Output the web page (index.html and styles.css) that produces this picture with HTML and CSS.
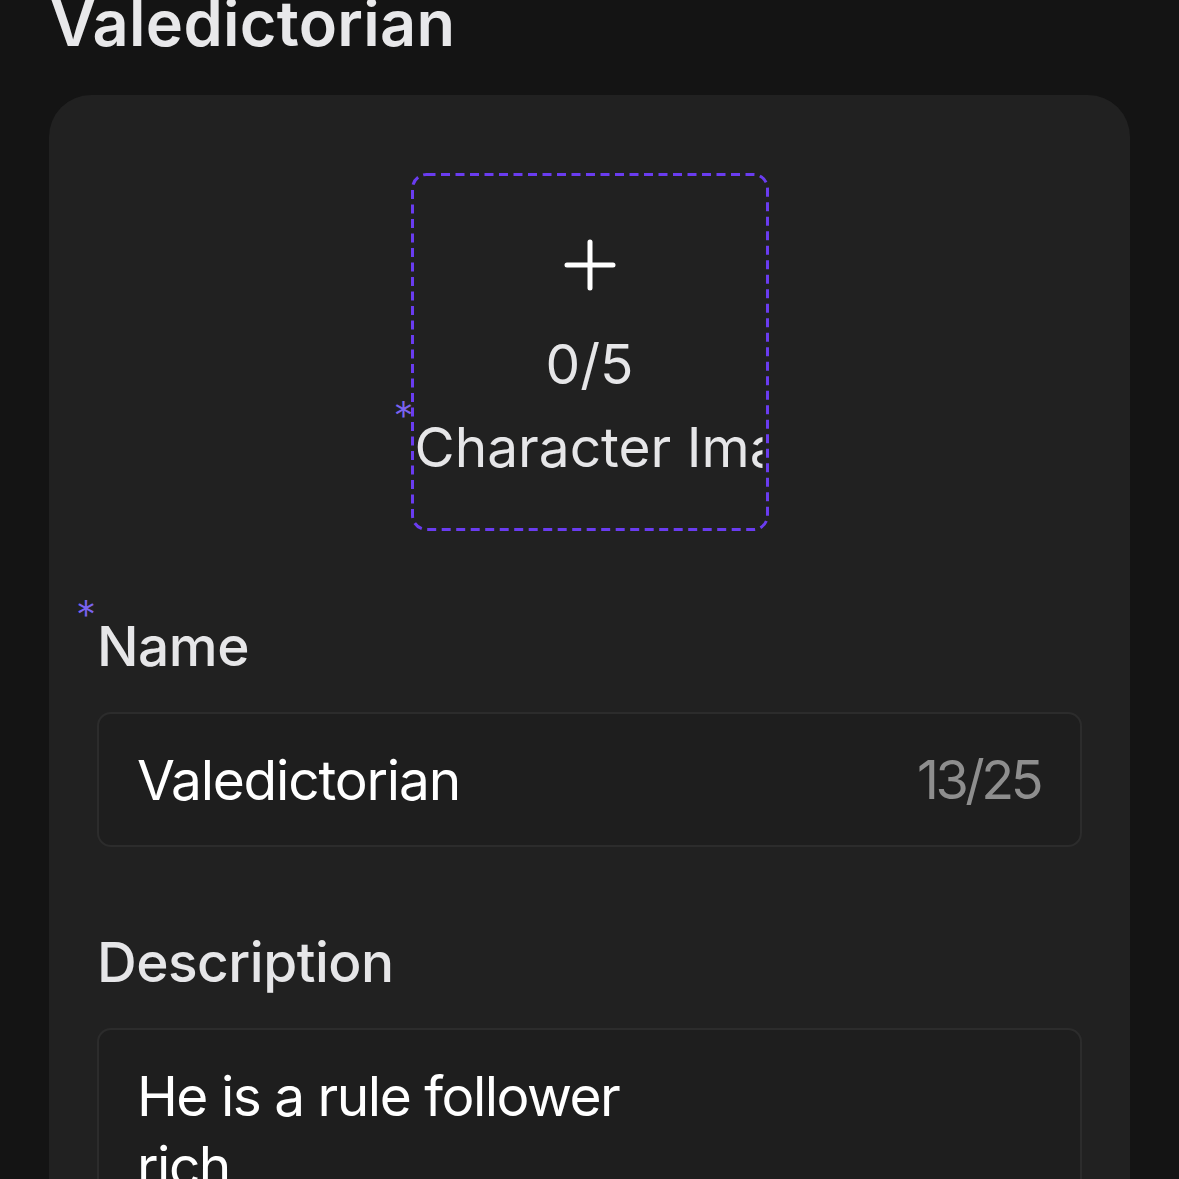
FILE: index.html
```html
<!DOCTYPE html>
<html lang="en">
<head>
    <meta charset="UTF-8">
    <meta name="viewport" content="width=device-width, initial-scale=1.0">
    <title>Edit Character</title>
    <link rel="stylesheet" href="styles.css">
</head>
<body>

    <!-- Page title -->
    <h1 class="page-title">Valedictorian</h1>

    <!-- Character form card -->
    <div class="card">
        <div class="upload-wrap">
            <div class="upload-box">
                <svg class="upload-border" width="358" height="358" viewBox="0 0 358 358">
                    <rect x="1.5" y="1.5" width="355" height="355" rx="14" ry="14" fill="none" stroke="#6a3cf0" stroke-width="3" stroke-dasharray="9 5.5"/>
                </svg>
                <svg class="plus-icon" width="52" height="52" viewBox="0 0 52 52">
                    <path d="M26 3 V49 M3 26 H49" stroke="#fff" stroke-width="5" stroke-linecap="round" fill="none"/>
                </svg>
                <div class="upload-count">0/5</div>
                <div class="upload-label required">Character Images</div>
            </div>
        </div>

        <div class="field">
            <label class="field-label required" for="name">Name</label>
            <div class="input-box">
                <span class="input-text" id="name">Valedictorian</span>
                <span class="input-count">13/25</span>
            </div>
        </div>

        <div class="field">
            <label class="field-label" for="desc">Description</label>
            <div class="textarea-box" id="desc">He is a rule follower
rich</div>
        </div>
    </div>

</body>
</html>
```

FILE: styles.css
```css
/* Global Styling */
body {
    font-family: 'Inter', 'Noto Sans', sans-serif;
    margin: 0;
    padding: 0;
    background-color: #141414;
    color: #e8e8ea;
    overflow: hidden;
}

/* Title */
.page-title {
    margin: -14px 0 0 50px;
    font-size: 63px;
    line-height: 74px;
    font-weight: 600;
    letter-spacing: 0.3px;
    color: #e8e8ea;
}

/* Card */
.card {
    margin: 35px 49px 0 49px;
    background-color: #212121;
    border-radius: 42px;
    padding: 78px 48px 80px 48px;
}

/* Upload box */
.upload-wrap {
    display: flex;
    justify-content: center;
}

.upload-box {
    position: relative;
    width: 358px;
    height: 358px;
    box-sizing: border-box;
    padding: 66px 4px 0 4px;
    display: flex;
    flex-direction: column;
    align-items: center;
}

.upload-border {
    position: absolute;
    left: 0;
    top: 0;
}

.plus-icon {
    display: block;
}

.upload-count {
    margin-top: 40px;
    font-size: 55px;
    line-height: 66px;
    color: #e6e6e8;
}

/* text is cut at the right border, asterisk stays outside on the left */
.upload-label {
    position: relative;
    align-self: stretch;
    margin-top: 17px;
    font-size: 55px;
    line-height: 66px;
    color: #e6e6e8;
    white-space: nowrap;
    text-align: left;
    clip-path: inset(-30px 2px -20px -30px);
}

/* Required asterisk */
.required::before {
    content: "*";
    position: absolute;
    left: -21px;
    top: -18px;
    font-size: 40px;
    line-height: 40px;
    font-weight: 300;
    color: #7a63f0;
}

/* Form fields */
.field {
    margin-top: 82px;
}

.field-label {
    position: relative;
    display: inline-block;
    font-size: 55px;
    line-height: 66px;
    font-weight: 500;
    letter-spacing: -0.5px;
    color: #e6e6e8;
}

.input-box {
    margin-top: 33px;
    height: 135px;
    box-sizing: border-box;
    border: 2px solid #2c2c2c;
    border-radius: 14px;
    background-color: #1e1e1e;
    padding: 0 40px 0 38px;
    display: flex;
    align-items: center;
    justify-content: space-between;
}

.input-text {
    font-size: 55px;
    letter-spacing: -1.2px;
    color: #fff;
}

.input-count {
    font-size: 54px;
    letter-spacing: -3.5px;
    color: #8e8e8e;
}

.textarea-box {
    margin-top: 33px;
    min-height: 300px;
    box-sizing: border-box;
    border: 2px solid #2c2c2c;
    border-radius: 14px;
    background-color: #1e1e1e;
    padding: 31px 38px;
    font-size: 55px;
    line-height: 70px;
    letter-spacing: -1.5px;
    color: #fff;
    white-space: pre-line;
}
```
